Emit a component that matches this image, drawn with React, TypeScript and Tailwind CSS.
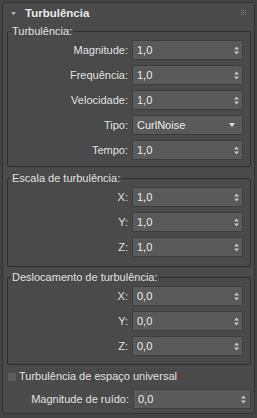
import React from 'react';

/**
 * Turbulence rollout from a particle-flow style property panel
 */

function Spinner() {
  return (
    <svg width="5" height="9" viewBox="0 0 5 9" className="shrink-0">
      <path d="M0 3.5 L2.5 0.5 L5 3.5 Z" fill="#c4c4c4" />
      <path d="M0 5.5 L5 5.5 L2.5 8.5 Z" fill="#c4c4c4" />
    </svg>
  );
}

function ComboArrow() {
  return (
    <svg width="6" height="4" viewBox="0 0 6 4" className="shrink-0">
      <path d="M0 0 L6 0 L3 4 Z" fill="#e0e0e0" />
    </svg>
  );
}

interface FieldRowProps {
  label: string;
  value: string;
  combo?: boolean;
  wide?: boolean;
}

function FieldRow({ label, value, combo, wide }: FieldRowProps) {
  return (
    <div className="flex h-[20px] items-center">
      <div className="flex-1 pr-[4px] text-right text-[#e0e0e0]">{label}</div>
      <div
        className={`flex h-full items-center justify-between border border-[#3e3e3e] bg-[#5a5a5a] pl-[4px] text-[#ebebeb] ${
          wide ? 'w-[118px] pr-[4px]' : 'w-[111px]'
        } ${combo ? 'pr-[7px]' : 'pr-[3px]'}`}
      >
        <span>{value}</span>
        {combo ? <ComboArrow /> : <Spinner />}
      </div>
    </div>
  );
}

interface GroupProps {
  title: string;
  className?: string;
  children: React.ReactNode;
}

function Group({ title, className, children }: GroupProps) {
  return (
    <fieldset
      className={`rounded-[2px] border border-[#2f2f2f] pr-[7px] ${className ?? ''}`}
    >
      <legend className="ml-[3px] px-[1px] leading-[13px] text-[#e0e0e0]">{title}</legend>
      <div className="flex flex-col gap-[5px] pt-[2px]">{children}</div>
    </fieldset>
  );
}

function GripDots() {
  return (
    <div className="grid grid-cols-3 gap-[1px]">
      {Array.from({ length: 9 }).map((_, i) => (
        <div key={i} className="h-[1px] w-[1px] bg-[#7c7c7c]" />
      ))}
    </div>
  );
}

export default function App() {
  return (
    <div className="h-[418px] w-[257px] bg-[#444444] px-[2px] pt-[2px] font-['Liberation_Sans',Arial,sans-serif] text-[11px]">
      <div className="rounded-[3px] border border-[#333333] bg-[#4a4a4a] pb-[4px] pl-[4px] pr-[3px]">
        <div className="flex h-[22px] items-center">
          <svg width="5" height="4" viewBox="0 0 5 4" className="ml-[4px] mt-[-1px]">
            <path d="M0 0 L5 0 L2.5 3.5 Z" fill="#a8a8a8" />
          </svg>
          <span className="ml-[9px] text-[11.5px] font-bold text-[#e8e8e8]">Turbulência</span>
          <div className="ml-auto mr-[5px] mt-[-3px]">
            <GripDots />
          </div>
        </div>

        <Group title="Turbulência:" className="pb-[6px]">
          <FieldRow label="Magnitude:" value="1,0" />
          <FieldRow label="Frequência:" value="1,0" />
          <FieldRow label="Velocidade:" value="1,0" />
          <FieldRow label="Tipo:" value="CurlNoise" combo />
          <FieldRow label="Tempo:" value="1,0" />
        </Group>

        <Group title="Escala de turbulência:" className="mt-[5px] pb-[9px]">
          <FieldRow label="X:" value="1,0" />
          <FieldRow label="Y:" value="1,0" />
          <FieldRow label="Z:" value="1,0" />
        </Group>

        <Group title="Deslocamento de turbulência:" className="mt-[4px] pb-[8px]">
          <FieldRow label="X:" value="0,0" />
          <FieldRow label="Y:" value="0,0" />
          <FieldRow label="Z:" value="0,0" />
        </Group>

        <label className="mt-[5px] flex h-[13px] items-center text-[#e0e0e0]">
          <span className="h-[10px] w-[10px] border border-[#4a4a4a] bg-[#5e5e5e]" />
          <span className="ml-[2px]">Turbulência de espaço universal</span>
        </label>

        <div className="mt-[6px]">
          <FieldRow label="Magnitude de ruído:" value="0,0" wide />
        </div>
      </div>
    </div>
  );
}
